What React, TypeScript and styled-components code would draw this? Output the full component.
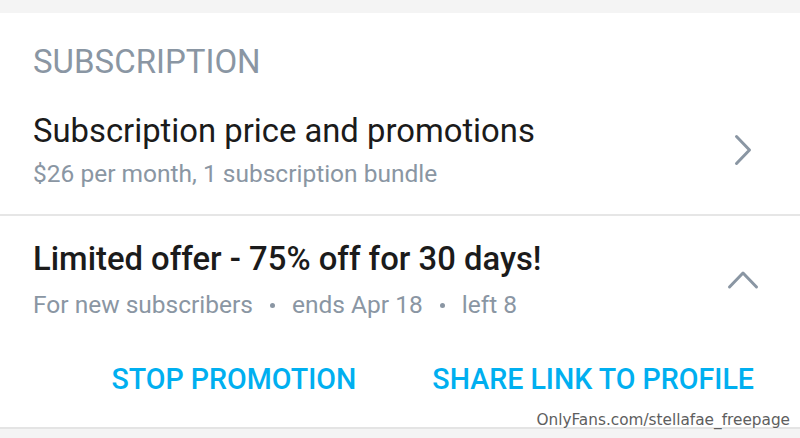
import React from "react";
import styled, { createGlobalStyle } from "styled-components";

const Global = createGlobalStyle`
  html, body { margin: 0; padding: 0; background: #f4f4f4; }
  body { font-family: Roboto, "Noto Sans", sans-serif; -webkit-font-smoothing: antialiased; }
  * { box-sizing: border-box; }
`;

const Page = styled.div`
  position: relative;
  width: 800px;
  height: 438px;
  overflow: hidden;
  background: #f4f4f4;
  display: flex;
  flex-direction: column;
`;

const TopStrip = styled.div`
  height: 13px;
  background: #f4f4f4;
  flex: none;
`;

const Card = styled.section`
  background: #ffffff;
  height: 416px;
  flex: none;
  display: flex;
  flex-direction: column;
  border-bottom: 2px solid #e4e4e4;
`;

const SectionTitle = styled.h2`
  margin: 0;
  padding: 29px 33px 0;
  font-size: 33px;
  line-height: 40px;
  font-weight: 400;
  color: #8a96a3;
`;

const Row = styled.div<{ $top: number; $bottom: number }>`
  display: flex;
  align-items: center;
  padding: ${(p) => p.$top}px 37px ${(p) => p.$bottom}px 33px;
`;

const RowText = styled.div`
  flex: 1;
  display: flex;
  flex-direction: column;
`;

const Title = styled.div<{ $bold?: boolean }>`
  font-size: 32.8px;
  line-height: 40px;
  font-weight: ${(p) => (p.$bold ? 500 : 400)};
  color: #1b1b1b;
`;

const Sub = styled.div<{ $gap: number }>`
  margin-top: ${(p) => p.$gap}px;
  font-size: 24.5px;
  line-height: 30px;
  color: #8a96a3;
  display: flex;
  align-items: center;
`;

const Dot = styled.span`
  display: inline-block;
  width: 5px;
  height: 5px;
  border-radius: 50%;
  background: #8a96a3;
  margin: 0 17px;
`;

const Divider = styled.hr`
  margin: 0;
  border: none;
  height: 2px;
  background: #e6e6e6;
  flex: none;
`;

const IconWrap = styled.div`
  width: 40px;
  display: flex;
  justify-content: center;
  flex: none;
`;

const Actions = styled.div`
  display: flex;
  justify-content: flex-end;
  gap: 76px;
  padding: 42px 46px 0;
`;

const ActionButton = styled.button`
  background: none;
  border: none;
  padding: 0;
  font-family: Roboto, sans-serif;
  font-size: 28.6px;
  line-height: 34px;
  font-weight: 500;
  color: #00aff0;
  cursor: pointer;
`;

const Watermark = styled.div`
  position: absolute;
  right: 10px;
  bottom: 9px;
  font-family: "DejaVu Sans", sans-serif;
  font-size: 15.3px;
  color: #5e5e5e;
  text-shadow: 0 0 2px #fff, 0 0 2px #fff;
`;

const ChevronRight = () => (
  <svg width="20" height="32" viewBox="0 0 20 32" fill="none">
    <path d="M3.5 2.5 L16.5 16 L3.5 29.5" stroke="#8a96a3" strokeWidth="3" strokeLinecap="round" strokeLinejoin="round" />
  </svg>
);

const ChevronUp = () => (
  <svg width="32" height="20" viewBox="0 0 32 20" fill="none">
    <path d="M2.5 17 L16 3 L29.5 17" stroke="#8a96a3" strokeWidth="3" strokeLinecap="round" strokeLinejoin="round" />
  </svg>
);

export default function App() {
  return (
    <>
      <Global />
      <Page>
        <TopStrip />
        <Card>
          <SectionTitle>SUBSCRIPTION</SectionTitle>
          <Row $top={29} $bottom={25}>
            <RowText>
              <Title>Subscription price and promotions</Title>
              <Sub $gap={8}>$26 per month, 1 subscription bundle</Sub>
            </RowText>
            <IconWrap>
              <ChevronRight />
            </IconWrap>
          </Row>
          <Divider />
          <Row $top={23} $bottom={0}>
            <RowText>
              <Title $bold>Limited offer - 75% off for 30 days!</Title>
              <Sub $gap={11}>
                For new subscribers<Dot />ends Apr 18<Dot />left 8
              </Sub>
            </RowText>
            <IconWrap>
              <ChevronUp />
            </IconWrap>
          </Row>
          <Actions>
            <ActionButton>STOP PROMOTION</ActionButton>
            <ActionButton>SHARE LINK TO PROFILE</ActionButton>
          </Actions>
        </Card>
        <Watermark>OnlyFans.com/stellafae_freepage</Watermark>
      </Page>
    </>
  );
}
